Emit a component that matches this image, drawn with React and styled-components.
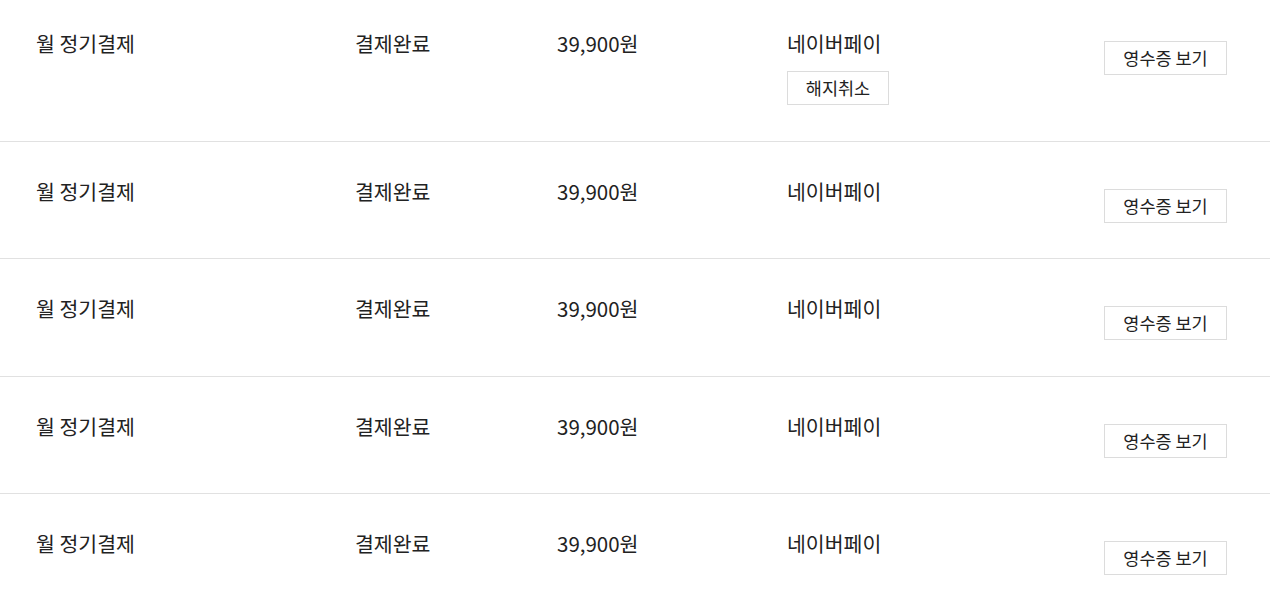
import styled, { createGlobalStyle } from "styled-components";

const GlobalStyle = createGlobalStyle`
  html, body {
    margin: 0;
    padding: 0;
    background: #fff;
    overflow: hidden;
  }
  body {
    font-family: "Noto Sans CJK KR", "Noto Sans", sans-serif;
    color: #222;
  }
`;

const List = styled.ul`
  list-style: none;
  margin: -6px 0 0;
  padding: 0;
  width: 1270px;
`;

const Row = styled.li`
  display: grid;
  grid-template-columns: 319px 202px 230px 1fr auto;
  align-items: start;
  padding: 36px 43px 35.5px 36px;
  border-bottom: 1px solid #e1e1e1;

  &:last-child {
    border-bottom: none;
  }
`;

const Cell = styled.div`
  font-size: 20.5px;
  line-height: 27px;
  display: flex;
  flex-direction: column;
  align-items: flex-start;
`;

const ActionCell = styled.div`
  display: flex;
  justify-content: flex-end;
  padding-top: 11px;
`;

const OutlineButton = styled.button`
  box-sizing: border-box;
  height: 34px;
  width: ${(p) => p.width};
  margin-top: ${(p) => p.offset || 0};
  padding: 0;
  background: #fff;
  border: 1px solid #dcdcdc;
  font-family: "Noto Sans CJK KR", "Noto Sans", sans-serif;
  font-size: 17.5px;
  line-height: 1;
  color: #222;
  cursor: pointer;
`;

const payments = [
  { name: "월 정기결제", status: "결제완료", price: "39,900원", method: "네이버페이", cancel: true },
  { name: "월 정기결제", status: "결제완료", price: "39,900원", method: "네이버페이" },
  { name: "월 정기결제", status: "결제완료", price: "39,900원", method: "네이버페이" },
  { name: "월 정기결제", status: "결제완료", price: "39,900원", method: "네이버페이" },
  { name: "월 정기결제", status: "결제완료", price: "39,900원", method: "네이버페이" },
];

export default function App() {
  return (
    <>
      <GlobalStyle />
      <List>
        {payments.map((item, i) => (
          <Row key={i}>
            <Cell>{item.name}</Cell>
            <Cell>{item.status}</Cell>
            <Cell>{item.price}</Cell>
            <Cell>
              {item.method}
              {item.cancel && (
                <OutlineButton width="102px" offset="14px">
                  해지취소
                </OutlineButton>
              )}
            </Cell>
            <ActionCell>
              <OutlineButton width="123px">영수증 보기</OutlineButton>
            </ActionCell>
          </Row>
        ))}
      </List>
    </>
  );
}
